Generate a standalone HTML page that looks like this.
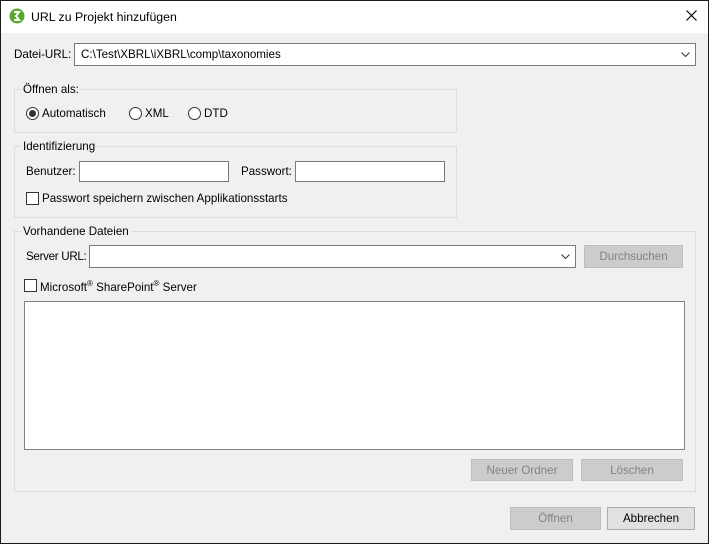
<!DOCTYPE html>
<html><head><meta charset="utf-8"><style>
*{box-sizing:border-box;margin:0;padding:0}
body{width:709px;height:544px;overflow:hidden;background:#f0f0f0;font-family:"Liberation Sans",sans-serif;font-size:11.6px;color:#000;position:relative}
.win{position:absolute;left:0;top:0;width:709px;height:544px;border:1px solid #1a1a1a;background:#f0f0f0}
.in{position:absolute;left:-1px;top:-1px;width:709px;height:544px}
.title{position:absolute;left:1px;top:1px;width:707px;height:32px;background:#fff}
.a{position:absolute;white-space:nowrap}
.inp{position:absolute;background:#fff;border:1px solid #7a7a7a}
.grp{position:absolute;border:1px solid #dcdcdc}
.lg{position:absolute;background:#f0f0f0;padding:0 2px;white-space:nowrap}
.btn{position:absolute;background:#cccccc;border:1px solid #bfbfbf;color:#838383;text-align:center;line-height:22px}
.rad{position:absolute;width:13px;height:13px;border:1px solid #333;border-radius:50%;background:#fff}
.chk{position:absolute;width:13px;height:13px;border:1px solid #333;background:#fff}
.dd{position:absolute;width:9px;height:5px}
</style></head><body>
<div class="win"><div class="in">
<div class="title">
<svg class="a" style="left:8px;top:7px" width="16" height="16" viewBox="0 0 16 16"><circle cx="8" cy="8" r="7.5" fill="#5aa72c"/><path d="M5 4h5L7 8l3 4H5" fill="none" stroke="#fff" stroke-width="2"/></svg>
<div class="a" style="left:30px;top:9px;font-size:12.3px">URL zu Projekt hinzufügen</div>
<svg class="a" style="left:685px;top:9px" width="11" height="11"><path d="M0.5 0.5L10.5 10.5M10.5 0.5L0.5 10.5" stroke="#000" stroke-width="1.2"/></svg>
</div>
<div class="a" style="left:14px;top:48px">Datei-URL:</div>
<div class="inp" style="left:74px;top:43px;width:622px;height:23px"><span class="a" style="left:6px;top:4px">C:\Test\XBRL\iXBRL\comp\taxonomies</span>
<svg class="dd" style="right:5px;top:8px" viewBox="0 0 9 5"><path d="M0.5 0.5L4.5 4.5L8.5 0.5" fill="none" stroke="#333"/></svg></div>

<div class="grp" style="left:14px;top:89px;width:443px;height:44px"></div>
<div class="lg" style="left:21px;top:83px">Öffnen als:</div>
<div class="rad" style="left:26px;top:107px"><div style="position:absolute;left:2px;top:2px;width:7px;height:7px;border-radius:50%;background:#333"></div></div>
<div class="a" style="left:42px;top:107px">Automatisch</div>
<div class="rad" style="left:129px;top:107px"></div><div class="a" style="left:145px;top:107px">XML</div>
<div class="rad" style="left:188px;top:107px"></div><div class="a" style="left:204px;top:107px">DTD</div>

<div class="grp" style="left:14px;top:146px;width:443px;height:72px"></div>
<div class="lg" style="left:21px;top:140px">Identifizierung</div>
<div class="a" style="left:26px;top:165px">Benutzer:</div>
<div class="inp" style="left:79px;top:161px;width:150px;height:21px"></div>
<div class="a" style="left:241px;top:165px">Passwort:</div>
<div class="inp" style="left:295px;top:161px;width:150px;height:21px"></div>
<div class="chk" style="left:26px;top:192px"></div>
<div class="a" style="left:42px;top:192px">Passwort speichern zwischen Applikationsstarts</div>

<div class="grp" style="left:14px;top:231px;width:682px;height:261px"></div>
<div class="lg" style="left:21px;top:225px">Vorhandene Dateien</div>
<div class="a" style="left:26px;top:250px;letter-spacing:-0.3px">Server URL:</div>
<div class="inp" style="left:89px;top:245px;width:487px;height:23px"><svg class="dd" style="right:5px;top:8px" viewBox="0 0 9 5"><path d="M0.5 0.5L4.5 4.5L8.5 0.5" fill="none" stroke="#333"/></svg></div>
<div class="btn" style="left:584px;top:245px;width:99px;height:23px">Durchsuchen</div>
<div class="chk" style="left:24px;top:279px"></div>
<div class="a" style="left:40px;top:279px">Microsoft<sup style="font-size:8px">®</sup> SharePoint<sup style="font-size:8px">®</sup> Server</div>
<div class="inp" style="left:24px;top:301px;width:661px;height:149px;border-color:#828282"></div>
<div class="btn" style="left:471px;top:459px;width:102px;height:22px;line-height:21px">Neuer Ordner</div>
<div class="btn" style="left:581px;top:459px;width:102px;height:22px;line-height:21px">Löschen</div>
<div class="btn" style="left:510px;top:507px;width:91px;height:23px">Öffnen</div>
<div class="btn" style="left:607px;top:507px;width:88px;height:23px;background:#e1e1e1;border-color:#adadad;color:#000">Abbrechen</div>
</div></div>
</body></html>
